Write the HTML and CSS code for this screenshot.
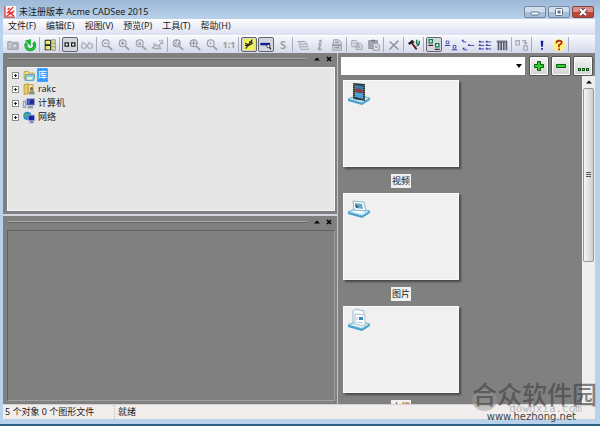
FILE: index.html
```html
<!DOCTYPE html>
<html lang="zh-CN">
<head>
  <meta charset="UTF-8" />
  <meta name="viewport" content="width=device-width, initial-scale=1.0" />
  <title>未注册版本 Acme CADSee 2015</title>
  <link rel="stylesheet" href="styles.css">
</head>
<body>
  <!-- Shared icon shapes -->
  <svg class="sprite" aria-hidden="true">
    <symbol id="lens" viewBox="0 0 16 16">
      <circle cx="6.5" cy="6" r="4" fill="#e4e6f0" stroke="#9a9ca6" stroke-width="1.2" />
      <path d="M9.5 9.5L14 13.5" stroke="#9a9ca6" stroke-width="2" />
    </symbol>
    <symbol id="base" viewBox="0 0 24 24">
      <path d="M1 17L10 13L23 16L15 21Z" fill="#c5e8f7" stroke="#69b4d6" />
      <path d="M1 17L15 21L23 16V18L15 23L1 19Z" fill="#4a9fca" />
      <path d="M5 17L11 15L19 17L15 19Z" fill="#eefaff" />
    </symbol>
    <symbol id="close" viewBox="0 0 8 8">
      <path d="M2 2L6 6M6 2L2 6" stroke="#000" stroke-width="1.6" />
    </symbol>
    <symbol id="up" viewBox="0 0 8 8">
      <path d="M1 5.5L4 2.5L7 5.5Z" fill="#000" />
    </symbol>
  </svg>

  <header class="title-bar">
    <svg class="logo" viewBox="0 0 13 13">
      <path d="M0 0H13V13H0Z" fill="#fff" />
      <path d="M1 0V12H12" fill="none" stroke="#b33" stroke-width="1.4" />
      <path d="M10 1L4 7H8L3 11M6 2L4 4M11 5L8 9L11 11" fill="none" stroke="#e33" stroke-width="1.5" />
    </svg>
    <h1>未注册版本 Acme CADSee 2015</h1>
    <div class="window-buttons">
      <button type="button" aria-label="最小化"><svg viewBox="0 0 14 10"><rect x="3" y="5" width="8" height="3" rx="1" fill="#fff" stroke="#5f7289" /></svg></button>
      <button type="button" aria-label="最大化"><svg viewBox="0 0 14 10"><rect x="3.5" y="1.5" width="7" height="7" rx="1" fill="#fff" stroke="#5f7289" /><rect x="6" y="4" width="2" height="2" fill="#6f86a0" stroke="#5f7289" /></svg></button>
      <button type="button" class="quit" aria-label="关闭"><svg viewBox="0 0 14 10"><path d="M4 2L10 8M10 2L4 8" stroke="#6b3a3a" stroke-width="4" /><path d="M4 2L10 8M10 2L4 8" stroke="#fff" stroke-width="2.2" /></svg></button>
    </div>
  </header>

  <nav class="menu-bar">
    <a href="#file">文件(F)</a>
    <a href="#edit">编辑(E)</a>
    <a href="#view">视图(V)</a>
    <a href="#preview">预览(P)</a>
    <a href="#tools">工具(T)</a>
    <a href="#help">帮助(H)</a>
  </nav>

  <div class="toolbar">
    <div class="group">
      <button type="button" aria-label="打开"><svg viewBox="0 0 16 16"><path d="M2 4H6L7 5H14V13H2Z" fill="#b9bbc4" stroke="#9a9ca6" /><circle cx="10" cy="9" r="2.5" fill="#d9dbe4" stroke="#9a9ca6" /><path d="M3 7H6M3 10H6" stroke="#dfe0e8" /></svg></button>
      <button type="button" aria-label="刷新"><svg viewBox="0 0 16 16"><path d="M4 6A5 5 0 1 0 12 5" fill="none" stroke="#0a8d1c" stroke-width="3.4" /><path d="M4 6A5 5 0 1 0 12 5" fill="none" stroke="#22c63a" stroke-width="2" /><path d="M9 1L2 3L9 9Z" fill="#1bb533" /></svg></button>
    </div>
    <div class="group">
      <button type="button" aria-label="面板"><svg viewBox="0 0 16 16"><rect x="2" y="2" width="7" height="12" fill="#222" /><path d="M3 3H8V7H3ZM3 9H8V13H3Z" fill="#ecec6a" /><path d="M10 2H14V14H10Z" fill="#e4e4a2" stroke="#888a64" /><path d="M11 6H14M11 10H14" stroke="#888a64" /></svg></button>
    </div>
    <div class="group">
      <button type="button" class="pressed" aria-label="浏览"><svg viewBox="0 0 16 16"><path d="M2 6H6V10H2ZM10 6H14V10H10Z" fill="#fff" stroke="#222" stroke-width="1.6" /></svg></button>
      <button type="button" aria-label="查看"><svg viewBox="0 0 16 16"><g fill="none" stroke="#a5a7b1" stroke-width="1.2"><circle cx="4.5" cy="9" r="2.8" /><circle cx="11.5" cy="9" r="2.8" /><path d="M2 6L4 4M9 6L11 4M7 9H9" /></g></svg></button>
    </div>
    <div class="group">
      <button type="button" aria-label="缩小"><svg viewBox="0 0 16 16"><use href="#lens" /><path d="M4.5 6H8.5" stroke="#888a94" /></svg></button>
      <button type="button" aria-label="放大"><svg viewBox="0 0 16 16"><use href="#lens" /><path d="M4.5 6H8.5M6.5 4V8" stroke="#888a94" /></svg></button>
      <button type="button" aria-label="窗口缩放"><svg viewBox="0 0 16 16"><use href="#lens" /><path d="M5 5H8V8H5Z" fill="#a5a7b1" /></svg></button>
      <button type="button" aria-label="平移"><svg viewBox="0 0 16 16"><path d="M1 12L5 8L3 6M5 8L9 9L12 5M9 3H11M13 2V5M12 5L14 7M3 12H11L9 9" fill="none" stroke="#a5a7b1" stroke-width="1.5" /></svg></button>
    </div>
    <div class="group">
      <button type="button" aria-label="动态缩放"><svg viewBox="0 0 16 16"><use href="#lens" /><path d="M7 2L4 8M8 6L5 9M10 3L8 9" stroke="#888a94" /></svg></button>
      <button type="button" aria-label="全部缩放"><svg viewBox="0 0 16 16"><use href="#lens" /><path d="M2 6H11M6.5 2V10" stroke="#888a94" /></svg></button>
      <button type="button" aria-label="上一视图"><svg viewBox="0 0 16 16"><use href="#lens" /><path d="M5 6L7 4V8Z" fill="#a5a7b1" /></svg></button>
      <button type="button" class="glyph">1:1</button>
    </div>
    <div class="group">
      <button type="button" class="pressed" aria-label="线条"><svg viewBox="0 0 16 16"><path d="M1 1H15V15H1Z" fill="#eff05a" /><path d="M12 2L4 13M3 6L8 9L13 6M3 9H7M8 5H12" fill="none" stroke="#222" stroke-width="1.4" /></svg></button>
      <button type="button" class="pressed" aria-label="线宽"><svg viewBox="0 0 16 16"><path d="M1 6H13V9H1Z" fill="#121b9c" /><circle cx="11" cy="10" r="2" fill="#fff" stroke="#222" /><path d="M12 11L14 14" stroke="#222" stroke-width="1.4" /></svg></button>
      <button type="button" class="glyph letter">S</button>
    </div>
    <div class="group">
      <button type="button" aria-label="图层"><svg viewBox="0 0 16 16"><path d="M2 4H10L13 7H5ZM3 7L5 10H13V8M4 10L6 13H14V11" fill="#dfe1ea" stroke="#9a9ca6" /></svg></button>
      <button type="button" aria-label="信息"><svg viewBox="0 0 16 16"><path d="M7 2H10V5H7ZM6 6H10L8 12H10V14H5L7 8H6Z" fill="#a5a7b1" /></svg></button>
      <button type="button" aria-label="打印"><svg viewBox="0 0 16 16"><path d="M4 2H10L13 5V14H3V6H4Z" fill="#d6d8e0" stroke="#9a9ca6" /><path d="M3 8H13M5 11H11M6 5H10" stroke="#9a9ca6" stroke-width="2" /></svg></button>
    </div>
    <div class="group">
      <button type="button" aria-label="复制"><svg viewBox="0 0 16 16"><path d="M2 3H7L9 5V10H2ZM7 6H12L14 8V13H7Z" fill="#dfe1ea" stroke="#9a9ca6" /><path d="M9 9H12M9 11H12M4 6H6" stroke="#9a9ca6" /></svg></button>
      <button type="button" aria-label="粘贴"><svg viewBox="0 0 16 16"><path d="M2 3H12V12H2Z" fill="#a5a7b1" stroke="#8b8d97" /><path d="M5 2H9V4H5Z" fill="#777983" /><path d="M7 6H12L14 8V14H7Z" fill="#e4e6ee" stroke="#8b8d97" /><path d="M9 9H12M9 11H12" stroke="#8b8d97" /></svg></button>
    </div>
    <div class="group">
      <button type="button" aria-label="删除"><svg viewBox="0 0 16 16"><path d="M3 4L13 13M13 3L3 13" stroke="#9597a1" stroke-width="1.8" /></svg></button>
    </div>
    <div class="group">
      <button type="button" aria-label="选项"><svg viewBox="0 0 16 16"><path d="M5 5L11 13" fill="none" stroke="#5b1a14" stroke-width="2" /><path d="M1 6L6 2L9 5L5 6L3 8Z" fill="#222" /><path d="M11 2V6L13 8L14 6V3" fill="none" stroke="#11734d" stroke-width="1.6" /><path d="M12 8L10 10" stroke="#333" /></svg></button>
    </div>
    <div class="group">
      <button type="button" class="pressed" aria-label="缩略图"><svg viewBox="0 0 16 16"><path d="M2 2H6V6H2ZM10 7H14V11H10Z" fill="#fff" stroke="#137d51" stroke-width="1.6" /><path d="M1 9H7M9 14H15" stroke="#4b1f35" stroke-width="1.4" /></svg></button>
      <button type="button" aria-label="大图标"><svg viewBox="0 0 16 16"><path d="M2.5 3.5H5.5V6.5H2.5ZM10.5 8.5H13.5V11.5H10.5Z" fill="#fff" stroke="#353da0" /><path d="M1 8.5H7M9 13.5H15" stroke="#353da0" stroke-width="1.2" /></svg></button>
      <button type="button" aria-label="小图标"><svg viewBox="0 0 16 16"><path d="M1 2H3V4H1ZM8 7H10V9H8ZM2 11H4V13H2Z" fill="#353da0" /><path d="M2 4.5H6M10 8.5H15M3 13.5H7" stroke="#353da0" /></svg></button>
      <button type="button" aria-label="列表"><svg viewBox="0 0 16 16"><path d="M1 3H3V5H1ZM9 3H11V5H9ZM1 7H3V9H1ZM9 7H11V9H9ZM1 11H3V13H1ZM9 11H11V13H9Z" fill="#353da0" /><path d="M2 4.5H7M10 4.5H15M2 8.5H7M10 8.5H15M2 12.5H7M10 12.5H15" stroke="#353da0" /></svg></button>
      <button type="button" aria-label="详细信息"><svg viewBox="0 0 16 16"><path d="M2 3H14V14H12V5H11V14H9V5H8V14H6V5H5V14H3V5H2Z" fill="#585b70" /><path d="M2 3.5H14" stroke="#8a8da0" /></svg></button>
    </div>
    <div class="group">
      <button type="button" aria-label="转换"><svg viewBox="0 0 16 16"><path d="M1 3H5V8H1ZM10 9H14V14H10ZM8 3H12V6M10 5L12 7L14 5" fill="none" stroke="#a5a7b1" stroke-width="1.3" /></svg></button>
    </div>
    <div class="group">
      <button type="button" aria-label="注册"><svg viewBox="0 0 16 16"><path d="M6.5 3H9.5L9 10H7Z" fill="#1a1aa8" /><path d="M7 11.5H9V13.5H7Z" fill="#1a1aa8" /></svg></button>
      <button type="button" aria-label="关于"><svg viewBox="0 0 16 16"><circle cx="8" cy="8" r="7" fill="#fff07c" /><path d="M5 6Q5 3 8 3Q11 3 11 5.5Q11 7 8 8V10.5" fill="none" stroke="#b52716" stroke-width="2" /><path d="M7 12H9V14H7Z" fill="#b52716" /></svg></button>
    </div>
  </div>

  <main class="workspace">
    <div class="docks">
      <section class="dock">
        <div class="dock-head">
          <span class="grip"></span>
          <button type="button" aria-label="折叠"><svg><use href="#up" /></svg></button>
          <button type="button" aria-label="关闭面板"><svg><use href="#close" /></svg></button>
        </div>
        <ul class="tree">
          <li>
            <button type="button" class="expander" aria-label="展开"></button>
            <svg viewBox="0 0 16 16"><path d="M2 3H7L8 5H14V12H2Z" fill="#f1dd7c" stroke="#b99b3c" /><path d="M4 7H15L14 14H3Z" fill="#8ed0e8" stroke="#4893b4" /><path d="M6 10H12V13H6Z" fill="#e9f7d2" /></svg>
            <a href="#library" class="selected">库</a>
          </li>
          <li>
            <button type="button" class="expander" aria-label="展开"></button>
            <svg viewBox="0 0 16 16"><path d="M2 2L7 1V13L2 14Z" fill="#edcf62" stroke="#b48f35" /><path d="M7 2H13V13H7Z" fill="#f7e59a" stroke="#b48f35" /><circle cx="11" cy="7" r="2" fill="#8b6b4d" /><path d="M8 14Q8 9 11 9Q15 9 15 14Z" fill="#8a9a7a" /></svg>
            <a href="#user">rakc</a>
          </li>
          <li>
            <button type="button" class="expander" aria-label="展开"></button>
            <svg viewBox="0 0 16 16"><path d="M5 2H15V10H5Z" fill="#222c9b" stroke="#aeb6c9" /><path d="M6 3H10L8 9H6Z" fill="#5365d4" /><path d="M1 5H4V13H1Z" fill="#ccd4e2" stroke="#7a8aa0" /><path d="M7 11H13V14H6Z" fill="#8f9db2" /></svg>
            <a href="#computer">计算机</a>
          </li>
          <li>
            <button type="button" class="expander" aria-label="展开"></button>
            <svg viewBox="0 0 16 16"><circle cx="6" cy="6" r="5" fill="#2a89d6" /><path d="M3 3Q7 1 6 5L4 8L2 6Z" fill="#49b956" /><path d="M7 5H15V12H7Z" fill="#1824a4" stroke="#b9c3dd" /><path d="M10 12H13L14 15H8Z" fill="#7b8ca8" /></svg>
            <a href="#network">网络</a>
          </li>
        </ul>
      </section>

      <section class="dock">
        <div class="dock-head">
          <span class="grip"></span>
          <button type="button" aria-label="折叠"><svg><use href="#up" /></svg></button>
          <button type="button" aria-label="关闭面板"><svg><use href="#close" /></svg></button>
        </div>
        <div class="preview"></div>
      </section>
    </div>

    <section class="browser">
      <div class="address">
        <div class="path">
          <select aria-label="路径"><option></option></select>
          <svg viewBox="0 0 8 8"><path d="M1 2H7L4 6Z" fill="#000" /></svg>
        </div>
        <button type="button" aria-label="添加"><svg viewBox="0 0 14 14"><path d="M5.5 2.5H8.5V5.5H11.5V8.5H8.5V11.5H5.5V8.5H2.5V5.5H5.5Z" fill="#2fd02f" stroke="#0b5c12" /></svg></button>
        <button type="button" aria-label="移除"><svg viewBox="0 0 14 14"><path d="M2.5 5.5H11.5V8.5H2.5Z" fill="#2fd02f" stroke="#0b5c12" /></svg></button>
        <button type="button" aria-label="更多"><svg viewBox="0 0 14 14"><path d="M2 9H5V12H2ZM6 9H9V12H6ZM10 9H13V12H10Z" fill="#0b5c12" /><path d="M3 10H4V11H3ZM7 10H8V11H7ZM11 10H12V11H11Z" fill="#5be05b" /></svg></button>
      </div>

      <div class="files">
        <div class="thumbs">
          <figure>
            <div class="card">
              <svg viewBox="0 0 24 24"><use href="#base" /><path d="M6 1L18 2V19L6 17Z" fill="#26343f" /><path d="M8 3L16 4V9L8 8Z" fill="#3a7ea8" /><path d="M8 10L16 11V17L8 15Z" fill="#4aa3d8" /><path d="M8 8L12 6L16 9V11L8 10Z" fill="#8e3d3a" /><path d="M7 2V17M17 3V18" stroke="#b9a865" stroke-dasharray="1 1" /></svg>
            </div>
            <figcaption>视频</figcaption>
          </figure>
          <figure>
            <div class="card">
              <svg viewBox="0 0 24 24"><use href="#base" /><path d="M6 6L17 7L19 16L7 15Z" fill="#f6fbfd" stroke="#8fb7c9" /><path d="M8 8L15 9L16 14L9 13Z" fill="#68a9ca" /><path d="M8 9L12 12L9 13Z" fill="#35566a" /></svg>
            </div>
            <figcaption>图片</figcaption>
          </figure>
          <figure>
            <div class="card">
              <svg viewBox="0 0 24 24"><use href="#base" /><path d="M6 3L9 1L17 3V17L6 15Z" fill="#f6fafd" stroke="#9bbccc" /><path d="M8 6L18 7V18L8 16Z" fill="#fff" stroke="#a9c2d0" /><path d="M12 9H16V12H12Z" fill="#3d86b8" /><path d="M10 14L16 15M10 9V12" stroke="#a7c5d6" /></svg>
            </div>
            <figcaption>文档</figcaption>
          </figure>
        </div>
        <div class="scrollbar" aria-hidden="true">
          <svg viewBox="0 0 8 8"><use href="#up" /></svg>
          <div class="thumb"></div>
        </div>
      </div>
    </section>
  </main>

  <footer class="status-bar">
    <span class="count">5 个对象 0 个图形文件</span>
    <span class="state">就绪</span>
  </footer>

  <div class="watermark">
    <span class="brand">合众软件园</span>
    <span class="ghost">downxia.com</span>
    <span class="site">www.hezhong.net</span>
  </div>
</body>
</html>
```
FILE: styles.css
```css
:root {
  --frame: #b7d2ea;
  --gray: #808080;
  --panel: #e6e6e6;
  --text: #1a1a1a;
}

* {
  box-sizing: border-box;
  margin: 0;
  padding: 0;
}

body {
  display: flex;
  flex-direction: column;
  height: 100vh;
  padding: 0 5px 5px 3px;
  border-bottom: 2px solid #2d6283;
  background-color: var(--frame);
  color: var(--text);
  font-family: "Noto Sans", "Noto Sans CJK SC", sans-serif;
  font-size: 9px;
  line-height: 14px;
  overflow: hidden;
}

button,
select {
  border: none;
  background: none;
  font: inherit;
}

a {
  color: inherit;
  text-decoration: none;
}

svg {
  display: block;
}

.sprite {
  position: absolute;
  width: 0;
  height: 0;
}

/* Title bar */
.title-bar {
  display: flex;
  align-items: center;
  flex: none;
  height: 19px;
  margin: 0 -5px 0 -3px;
  padding: 4px 6px 0 4px;
  gap: 3px;
  background: linear-gradient(#9db9d8, #b9d1ea);
}

.logo {
  width: 12px;
  height: 12px;
}

.title-bar h1 {
  flex: 1;
  font-size: 9px;
  font-weight: 400;
}

.window-buttons {
  display: flex;
  gap: 2px;
}

.window-buttons button {
  width: 22px;
  height: 12px;
  border: 1px solid #73879f;
  border-radius: 2px;
  background: linear-gradient(#d0deed 45%, #a9bfd8 50%);
}

.window-buttons .quit {
  border-color: #84403c;
  background: linear-gradient(#dc9188 45%, #bf4535 50%);
}

.window-buttons svg {
  height: 10px;
  margin: 0 auto;
}

/* Menu */
.menu-bar {
  display: flex;
  flex: none;
  height: 16px;
  padding-left: 5px;
  gap: 10px;
  background: linear-gradient(#fdfdff, #dce0f0);
}

/* Toolbar */
.toolbar {
  display: flex;
  flex: none;
  height: 18px;
  padding: 1px 0 1px 2px;
  border-top: 1px solid #fff;
  background: linear-gradient(#f7f8fd, #d5d9ea);
}

.group {
  display: flex;
  gap: 1px;
  padding-right: 1px;
  margin-right: 2px;
  border-right: 1px solid #a8abb9;
}

.toolbar button {
  width: 16px;
  height: 15px;
}

.toolbar svg {
  width: 14px;
  height: 14px;
  margin: 0 auto;
}

.toolbar .pressed {
  border: 1px solid #62646e;
  border-radius: 2px;
  background-color: #d4d6de;
}

.toolbar .pressed svg {
  height: 13px;
}

.toolbar .glyph {
  color: #9698a2;
  font-size: 9px;
  font-weight: 700;
  line-height: 14px;
}

.toolbar .letter {
  font-size: 11px;
  font-weight: 600;
}

/* Work area */
.workspace {
  display: grid;
  grid-template-columns: 335fr 257fr;
  flex: 1;
  min-height: 0;
  background-color: var(--gray);
}

.docks {
  display: grid;
  grid-template-rows: 161fr 191fr;
  min-height: 0;
  border-right: 1px solid #c4c4c4;
}

.dock {
  display: flex;
  flex-direction: column;
  padding: 0 2px 3px 4px;
}

.dock + .dock {
  border-top: 2px solid #d4d4dc;
}

.dock-head {
  display: flex;
  align-items: center;
  height: 14px;
  padding: 0 2px 2px 1px;
  gap: 4px;
}

.grip {
  flex: 1;
  height: 2px;
  margin-right: 2px;
  border-top: 1px solid #a6a6a6;
  border-bottom: 1px solid #696969;
}

.dock-head button,
.dock-head svg {
  width: 8px;
  height: 8px;
}

.tree,
.preview {
  flex: 1;
  border: 1px solid #a0a0a0;
  border-top-color: #606060;
  border-left-color: #606060;
}

.tree {
  padding: 0 4px;
  border-color: #f4f4f4;
  background-color: var(--panel);
  list-style: none;
}

.tree li {
  display: flex;
  align-items: center;
  height: 14px;
}

.tree li svg {
  width: 14px;
  height: 13px;
  margin: 0 1px 0 3px;
}

.expander {
  width: 7px;
  height: 7px;
  border: 1px solid #8c8c8c;
  background:
    linear-gradient(#222, #222) center / 3px 1px no-repeat,
    linear-gradient(#222, #222) center / 1px 3px no-repeat,
    #fff;
}

.tree a {
  padding: 0 1px;
}

.tree .selected {
  outline: 1px dotted #d69a55;
  outline-offset: -1px;
  background-color: #3399ff;
  color: #fff;
}

/* File browser */
.browser {
  display: flex;
  flex-direction: column;
  min-height: 0;
  padding: 2px 0 0 3px;
}

.address {
  display: flex;
  align-items: center;
  height: 21px;
  padding-right: 2px;
  gap: 2px;
}

.path {
  display: flex;
  align-items: center;
  flex: 1;
  height: 18px;
  margin-right: 2px;
  padding-right: 2px;
  background-color: #fff;
}

.path select {
  flex: 1;
  height: 18px;
  appearance: none;
}

.path svg {
  width: 8px;
  height: 8px;
}

.address button {
  width: 20px;
  height: 20px;
  border: 1px solid #555;
  border-radius: 2px;
  box-shadow: inset 0 0 0 1px #fff;
  background: linear-gradient(#f4f4f4, #d2d2d2);
}

.address button svg {
  width: 14px;
  height: 14px;
  margin: 0 auto;
}

.files {
  display: flex;
  justify-content: space-between;
  flex: 1;
  min-height: 0;
}

.thumbs {
  display: flex;
  flex-direction: column;
  padding: 4px 2px 0;
  gap: 5px;
  overflow: hidden;
}

.thumbs figure {
  display: flex;
  flex: none;
  flex-direction: column;
  align-items: center;
  gap: 7px;
  padding-right: 4px;
}

.card {
  width: 116px;
  height: 87px;
  padding: 1px 3px;
  border: 1px solid #fafafa;
  background-color: #f0f0f0;
  box-shadow: 2px 2px 2px #484848;
}

.card svg {
  width: 24px;
  height: 24px;
}

.thumbs figcaption {
  padding: 0 1px;
  background-color: #f0f0f0;
}

.scrollbar {
  width: 13px;
  background-color: #efefef;
}

.scrollbar svg {
  width: 8px;
  height: 12px;
  margin: 0 auto;
}

.thumb {
  width: 11px;
  height: 53%;
  margin: 0 auto;
  border: 1px solid #979797;
  border-radius: 2px;
  background:
    repeating-linear-gradient(#555 0 1px, transparent 1px 2px) center / 5px 6px no-repeat,
    linear-gradient(90deg, #f5f5f5, #cfcfd2);
}

/* Status bar */
.status-bar {
  display: flex;
  flex: none;
  height: 15px;
  padding: 0 2px;
  border-top: 1px solid #d5d2d3;
  background-color: #f1eded;
}

.count {
  width: 109px;
}

.state {
  padding-left: 3px;
  border-left: 1px dotted #c0bcbc;
}

/* Site mark over the lower right corner */
.watermark {
  position: absolute;
  right: 3px;
  bottom: 5px;
  display: grid;
  justify-items: end;
  color: #444;
  pointer-events: none;
}

.watermark::before {
  content: '';
  position: absolute;
  left: 0;
  top: 7px;
  width: 25px;
  height: 22px;
  border-radius: 50%;
  background-color: rgba(150, 150, 150, 0.5);
}

.brand {
  position: relative;
  color: rgba(64, 64, 64, 0.65);
  font-size: 25px;
  font-weight: 500;
  line-height: 24px;
}

.ghost {
  margin-right: 15px;
  color: rgba(130, 130, 130, 0.5);
  font-family: "DejaVu Sans Mono", monospace;
  font-size: 11px;
  line-height: 6px;
}

.site {
  margin-right: 21px;
  font-family: "DejaVu Sans", sans-serif;
  font-size: 10px;
  line-height: 9px;
}
```
